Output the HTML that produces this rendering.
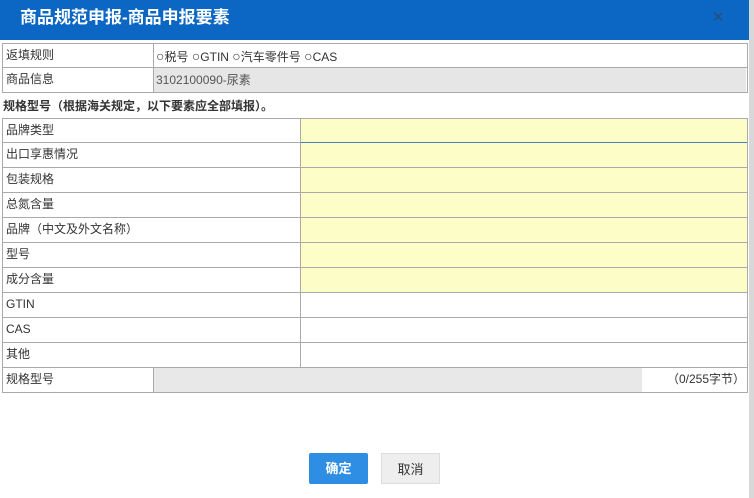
<!DOCTYPE html>
<html><head><meta charset="utf-8"><style>
body{margin:0;width:754px;height:498px;background:#fff;position:relative;overflow:hidden;font-family:"Liberation Sans","Noto Sans CJK SC",sans-serif;font-size:12px;color:#333}
.hd{position:absolute;left:0;top:0;width:749px;height:40px;background:#0b67c3;color:#fff;font-size:17px;font-weight:bold;line-height:36px;padding-left:20px;box-sizing:border-box}
.x{position:absolute;left:712px;top:10px;color:#2a4f7c;font-size:15px;line-height:16px;font-weight:normal}
.side{position:absolute;left:749px;top:0;width:5px;height:498px;background:#d8d8d8}
.r{position:absolute;left:2px;width:746px;height:25px;border:1px solid #aaa;border-top:none;box-sizing:border-box;line-height:22px}
.l{position:absolute;left:3px;top:0}
.v{position:absolute;top:0;height:24px}
.y{left:297px;width:446px;background:#fdfdc8;border-left:1px solid #aaa}
.btn{position:absolute;top:453px;width:59px;height:31px;line-height:31px;text-align:center;font-size:13px}
.o{font-size:14px}
</style></head><body>
<div class="hd">商品规范申报-商品申报要素<span class="x">✕</span></div>
<div class="side"></div>
<div class="r" style="top:43px;border-top:1px solid #aaa"><span class="l">返填规则</span><div class="v" style="left:150px;border-left:1px solid #aaa;padding-left:2px;line-height:24px"><span class="o">○</span>税号 <span class="o">○</span>GTIN <span class="o">○</span>汽车零件号 <span class="o">○</span>CAS</div></div>
<div class="r" style="top:68px"><span class="l">商品信息</span><div class="v" style="left:150px;width:593px;background:#e6e6e6;border-left:1px solid #aaa;padding-left:2px;box-sizing:border-box;line-height:24px;color:#555">3102100090-尿素</div></div>
<div style="position:absolute;left:3px;top:96px;font-weight:bold;line-height:20px">规格型号（根据海关规定，以下要素应全部填报）。</div>
<div class="r" style="top:118px;border-top:1px solid #aaa"><span class="l">品牌类型</span><div class="v y" style="border-bottom:1px solid #4a7fc0;height:23px"></div></div>
<div class="r" style="top:143px"><span class="l">出口享惠情况</span><div class="v y"></div></div>
<div class="r" style="top:168px"><span class="l">包装规格</span><div class="v y"></div></div>
<div class="r" style="top:193px"><span class="l">总氮含量</span><div class="v y"></div></div>
<div class="r" style="top:218px"><span class="l">品牌（中文及外文名称）</span><div class="v y"></div></div>
<div class="r" style="top:243px"><span class="l">型号</span><div class="v y"></div></div>
<div class="r" style="top:268px"><span class="l">成分含量</span><div class="v y"></div></div>
<div class="r" style="top:293px"><span class="l">GTIN</span><div class="v" style="left:297px;border-left:1px solid #aaa"></div></div>
<div class="r" style="top:318px"><span class="l">CAS</span><div class="v" style="left:297px;border-left:1px solid #aaa"></div></div>
<div class="r" style="top:343px"><span class="l">其他</span><div class="v" style="left:297px;border-left:1px solid #aaa"></div></div>
<div class="r" style="top:368px"><span class="l">规格型号</span><div class="v" style="left:150px;width:488px;background:#e8e8e8;border-left:1px solid #aaa"></div><span style="position:absolute;right:2px;top:0">（0/255字节）</span></div>
<div class="btn" style="left:309px;background:#2d8ee3;color:#fff;font-weight:bold;border-radius:2px">确定</div>
<div class="btn" style="left:381px;background:#eee;border:1px solid #ddd;box-sizing:border-box">取消</div>
</body></html>
